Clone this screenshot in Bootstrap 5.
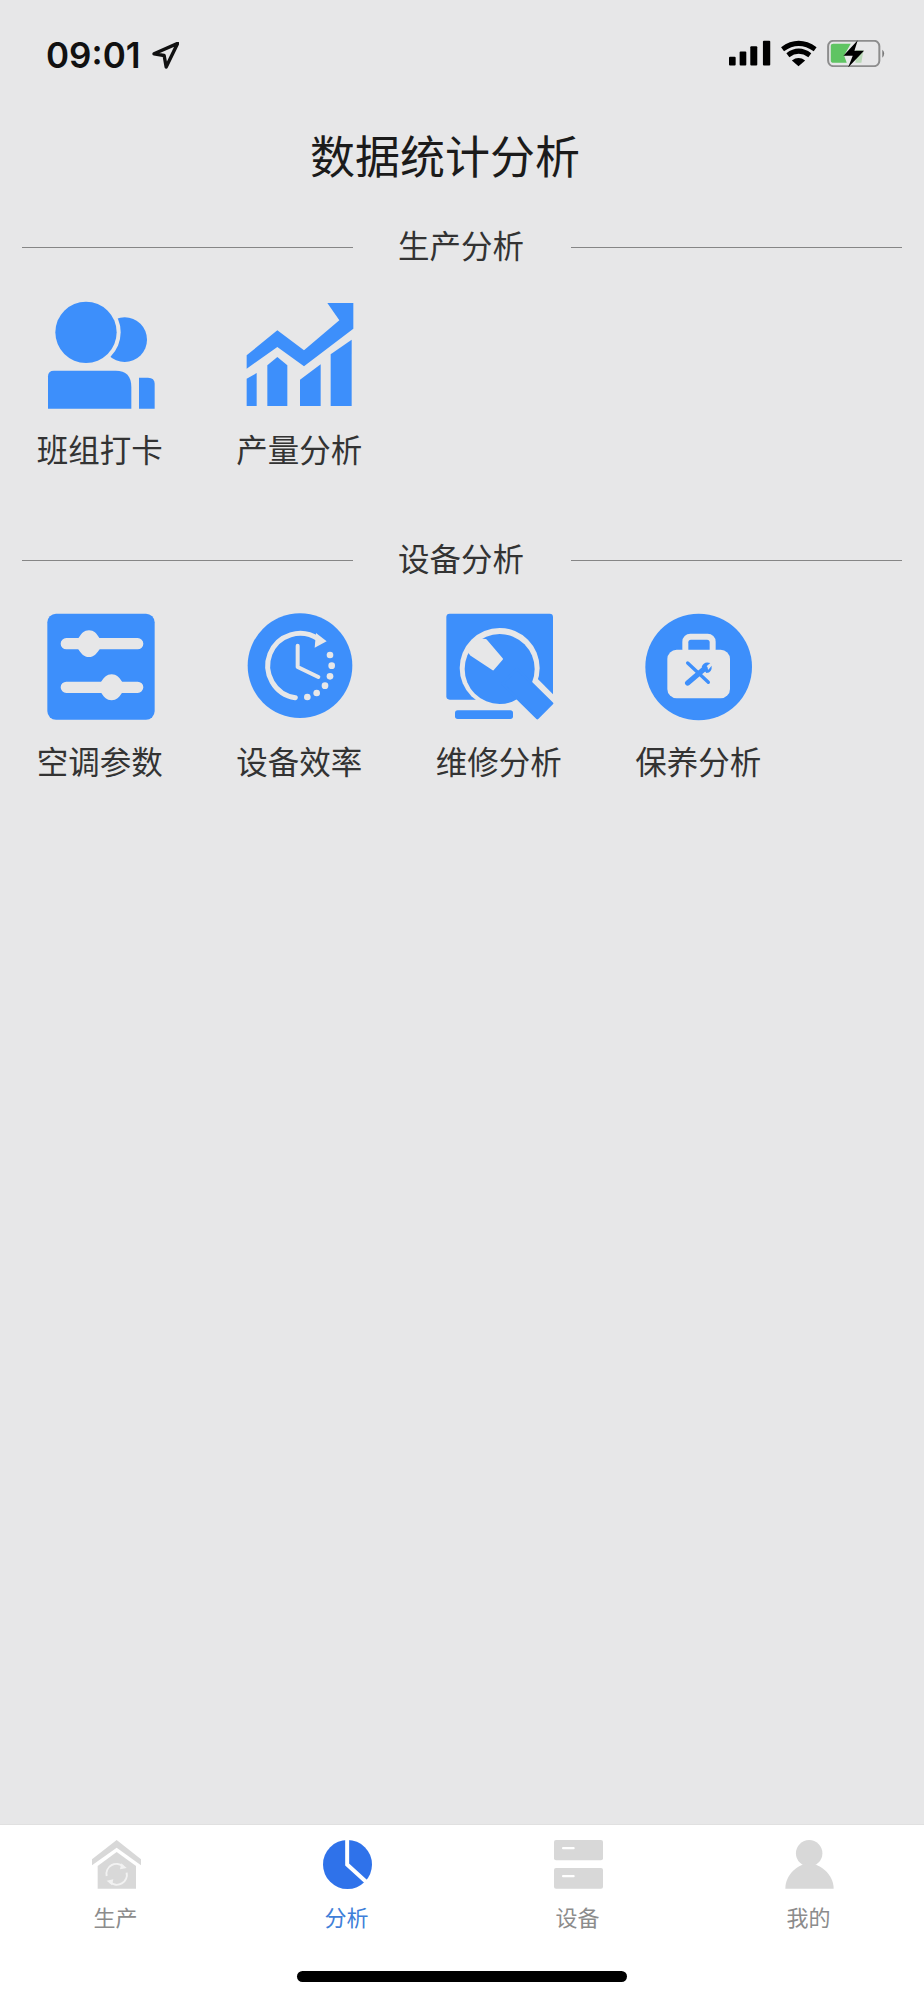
<!DOCTYPE html>
<html lang="zh-CN">
<head>
    <meta charset="UTF-8">
    <title>数据统计分析</title>
    <link href="https://cdn.jsdelivr.net/npm/bootstrap@5.3.0/dist/css/bootstrap.min.css" rel="stylesheet">
    <style>
        body {
            background-color: #e7e7e8;
            font-family: "Liberation Sans", "Noto Sans CJK SC", sans-serif;
            color: #2b2b2b;
        }
        .phone-page { min-height: 2000px; }
        .status-row { height: 90px; padding: 38px 38px 0 46px; }
        .status-time { font-family: Inter, "Liberation Sans", sans-serif; font-size: 35px; line-height: 34px; font-weight: 600; color: #111; }
        .status-arrow { width: 27px; height: 27px; margin-left: 11px; }
        .status-icons { width: 157px; height: 27px; margin-top: 2px; }
        .page-title { margin: 41px 34px 0 0; font-size: 45px; line-height: 56px; font-weight: 400; color: #1b1b1b; text-align: center; }
        .section-head { padding: 0 22px; gap: 46px; height: 40px; margin-top: 40px; }
        .section-head.second { margin-top: 69px; }
        .section-line { flex: 1 1 0; height: 1px; background-color: #868686; }
        .section-name { margin: 0 1px 0 -1px; font-size: 31.5px; line-height: 40px; color: #333; }
        .tile-row { margin-top: 34px; margin-left: 1px; }
        .section-head.second + .tile-row { margin-top: 33px; }
        .tile { width: 199.5px; }
        .tile-icon { width: 108px; height: 108px; display: block; }
        .tile-name { margin: 22px 0 0 -2px; font-size: 31.5px; line-height: 40px; color: #333; white-space: nowrap; }
        .tab-bar { height: 176px; background-color: #fff; border-top: 1px solid #e0e0e0; padding-top: 15px; }
        .tab-icon { width: 49px; height: 49px; display: block; margin-left: 2px; }
        .tab-name { margin-top: 15px; font-size: 22px; line-height: 30px; color: #8c8c8c; }
        .tab-name.active-tab { color: #3f7fd9; }
        .home-bar { width: 330px; height: 11px; margin-top: 37px; border-radius: 6px; background-color: #000; }
    </style>
</head>
<body>
    <div class="phone-page d-flex flex-column">
        <div class="status-row d-flex justify-content-between align-items-start">
            <div class="d-flex align-items-center">
                <span class="status-time">09:01</span>
                <svg class="status-arrow" viewBox="366 68 80 80"><path d="M372 103 442 72 408 142 402 108Z" fill="none" stroke="#111" stroke-width="10" stroke-linejoin="round"/></svg>
            </div>
            <svg class="status-icons" viewBox="86 66 472 80">
                <rect x="86" y="116" width="20" height="26" rx="3" fill="#000"/>
                <rect x="118" y="100" width="20" height="42" rx="3" fill="#000"/>
                <rect x="150" y="84" width="21" height="58" rx="3" fill="#000"/>
                <rect x="188" y="68" width="22" height="74" rx="3" fill="#000"/>
                <path d="M247 93Q295 58 345 93M263 111Q295 87 329 111" fill="none" stroke="#000" stroke-width="15"/>
                <path d="M275 127Q295 112 315 127L295 144Z" fill="#000"/>
                <rect x="384" y="68" width="154" height="76" rx="16" fill="none" stroke="#8d8d8d" stroke-width="6"/>
                <path d="M547 95Q558 106 547 119Z" fill="#777"/>
                <path d="M392 84Q392 77 400 77H452L432 112 440 134H400Q392 134 392 126Z" fill="#5fc463"/>
                <path d="M468 96H490L484 134H466Z" fill="#b9d8b6"/>
                <path d="M473 66 430 113H458L444 148 492 98H463Z" fill="#000"/>
            </svg>
        </div>

        <h1 class="page-title">数据统计分析</h1>

        <div class="section-head d-flex align-items-center">
            <div class="section-line"></div>
            <div class="section-name">生产分析</div>
            <div class="section-line"></div>
        </div>
        <div class="tile-row d-flex">
            <div class="tile d-flex flex-column align-items-center">
                <svg class="tile-icon" viewBox="139 62 324 324">
                    <circle cx="372" cy="178" r="67" fill="#3d8ffb"/>
                    <circle cx="256" cy="156" r="104" fill="#e7e7e8"/>
                    <circle cx="256" cy="156" r="92" fill="#3d8ffb"/>
                    <path d="M142 385V288Q142 271 160 271H345Q392 271 392 320V385Z" fill="#3d8ffb"/>
                    <path d="M415 385V292H442Q462 292 462 310V385Z" fill="#3d8ffb"/>
                </svg>
                <div class="tile-name">班组打卡</div>
            </div>
            <div class="tile d-flex flex-column align-items-center">
                <svg class="tile-icon" viewBox="738 62 324 324" fill="#3d8ffb">
                    <path d="M740 225 832 150 912 210 1018 120 982 68H1060V145L912 258 832 200 740 265Z"/>
                    <path d="M740 295 770 278V377H740Z"/>
                    <path d="M802 255 832 230 862 255V377H802Z"/>
                    <path d="M900 298 962 252V377H900Z"/>
                    <path d="M992 222 1055 178V377H992Z"/>
                </svg>
                <div class="tile-name">产量分析</div>
            </div>
        </div>

        <div class="section-head second d-flex align-items-center">
            <div class="section-line"></div>
            <div class="section-name">设备分析</div>
            <div class="section-line"></div>
        </div>
        <div class="tile-row d-flex">
            <div class="tile d-flex flex-column align-items-center">
                <svg class="tile-icon" viewBox="139 70 324 324">
                    <rect x="140" y="72" width="322" height="318" rx="26" fill="#3d8ffb"/>
                    <path d="M197 162H411M197 293H411" stroke="#e7e7e8" stroke-width="34" stroke-linecap="round"/>
                    <path d="M210 162C235 162 235 122 265 122S295 162 320 162C295 162 295 202 265 202S235 162 210 162Z" fill="#e7e7e8"/>
                    <path d="M278 293C303 293 303 254 333 254S363 293 388 293C363 293 363 332 333 332S303 293 278 293Z" fill="#e7e7e8"/>
                </svg>
                <div class="tile-name">空调参数</div>
            </div>
            <div class="tile d-flex flex-column align-items-center">
                <svg class="tile-icon" viewBox="738 70 324 324">
                    <circle cx="900" cy="228" r="157" fill="#3d8ffb"/>
                    <path d="M886 324A97 97 0 1 1 955 148" fill="none" stroke="#e7e7e8" stroke-width="15" stroke-linecap="round"/>
                    <path d="M948 130 980 155 944 174Z" fill="#e7e7e8"/>
                    <g fill="#e7e7e8">
                        <circle cx="990" cy="196" r="10"/>
                        <circle cx="995" cy="228" r="10"/>
                        <circle cx="990" cy="260" r="10"/>
                        <circle cx="975" cy="288" r="10"/>
                        <circle cx="950" cy="310" r="10"/>
                        <circle cx="922" cy="322" r="10"/>
                    </g>
                    <path d="M893 168V232L955 262" fill="none" stroke="#e7e7e8" stroke-width="12" stroke-linecap="round" stroke-linejoin="round"/>
                </svg>
                <div class="tile-name">设备效率</div>
            </div>
            <div class="tile d-flex flex-column align-items-center">
                <svg class="tile-icon" viewBox="139 70 324 324">
                    <rect x="140" y="72" width="320" height="258" rx="10" fill="#3d8ffb"/>
                    <path d="M330 260 500 430" stroke="#e7e7e8" stroke-width="108"/>
                    <circle cx="300" cy="235" r="120" fill="#e7e7e8"/>
                    <circle cx="300" cy="238" r="105" fill="#3d8ffb"/>
                    <path d="M352 238 457 341 413 385 308 282Z" fill="#3d8ffb" stroke="#3d8ffb" stroke-width="8" stroke-linejoin="round"/>
                    <path d="M258 152 306 208 280 238 214 194 205 180 230 150Z" fill="#e7e7e8" stroke="#e7e7e8" stroke-width="8" stroke-linejoin="round"/>
                    <rect x="166" y="362" width="174" height="26" rx="8" fill="#3d8ffb"/>
                </svg>
                <div class="tile-name">维修分析</div>
            </div>
            <div class="tile d-flex flex-column align-items-center">
                <svg class="tile-icon" viewBox="738 70 324 324">
                    <circle cx="899" cy="232" r="160" fill="#3d8ffb"/>
                    <rect x="850" y="132" width="100" height="70" rx="24" fill="#e7e7e8"/>
                    <rect x="868" y="150" width="64" height="40" rx="8" fill="#3d8ffb"/>
                    <rect x="805" y="180" width="188" height="146" rx="28" fill="#e7e7e8"/>
                    <path d="M866 220 928 278" stroke="#3d8ffb" stroke-width="10" stroke-linecap="round"/>
                    <path d="M866 280 918 236" stroke="#3d8ffb" stroke-width="16" stroke-linecap="round"/>
                    <path d="M908 232Q914 214 934 220L920 232 928 240 938 228Q940 248 922 250Z" fill="#3d8ffb"/>
                </svg>
                <div class="tile-name">保养分析</div>
            </div>
        </div>

        <div class="mt-auto tab-bar">
            <div class="row g-0">
                <div class="col-3 d-flex flex-column align-items-center">
                    <svg class="tab-icon" viewBox="278 92 147 147">
                        <path d="M352 92 425 150V168L352 115 278 168V150Z" fill="#d8d8d8"/>
                        <path d="M352 128 410 170V238H295V170Z" fill="#d8d8d8"/>
                        <path d="M322 200A30 30 0 0 1 372 172M382 190A30 30 0 0 1 332 218" fill="none" stroke="#f2f2f2" stroke-width="6"/>
                        <path d="M366 162 382 176 362 180ZM338 228 322 214 342 210Z" fill="#f2f2f2"/>
                    </svg>
                    <div class="tab-name">生产</div>
                </div>
                <div class="col-3 d-flex flex-column align-items-center">
                    <svg class="tab-icon" viewBox="970 91 148 148">
                        <circle cx="1044" cy="165" r="74" fill="#2f72ea"/>
                        <path d="M1043 88V165L1100 217" fill="none" stroke="#fff" stroke-width="12"/>
                    </svg>
                    <div class="tab-name active-tab">分析</div>
                </div>
                <div class="col-3 d-flex flex-column align-items-center">
                    <svg class="tab-icon" viewBox="278 92 147 147">
                        <rect x="278" y="92" width="147" height="61" rx="6" fill="#d8d8d8"/>
                        <rect x="278" y="176" width="147" height="62" rx="6" fill="#d8d8d8"/>
                        <rect x="302" y="113" width="38" height="7" rx="3" fill="#fff"/>
                        <rect x="302" y="197" width="38" height="7" rx="3" fill="#fff"/>
                    </svg>
                    <div class="tab-name">设备</div>
                </div>
                <div class="col-3 d-flex flex-column align-items-center">
                    <svg class="tab-icon" viewBox="970 91 148 148" fill="#d8d8d8">
                        <circle cx="1043" cy="131" r="40"/>
                        <path d="M971 238C971 195 1010 162 1043 162S1117 195 1117 238Z"/>
                    </svg>
                    <div class="tab-name">我的</div>
                </div>
            </div>
            <div class="home-bar mx-auto"></div>
        </div>
    </div>

    <script src="https://cdn.jsdelivr.net/npm/bootstrap@5.3.0/dist/js/bootstrap.bundle.min.js"></script>
</body>
</html>
